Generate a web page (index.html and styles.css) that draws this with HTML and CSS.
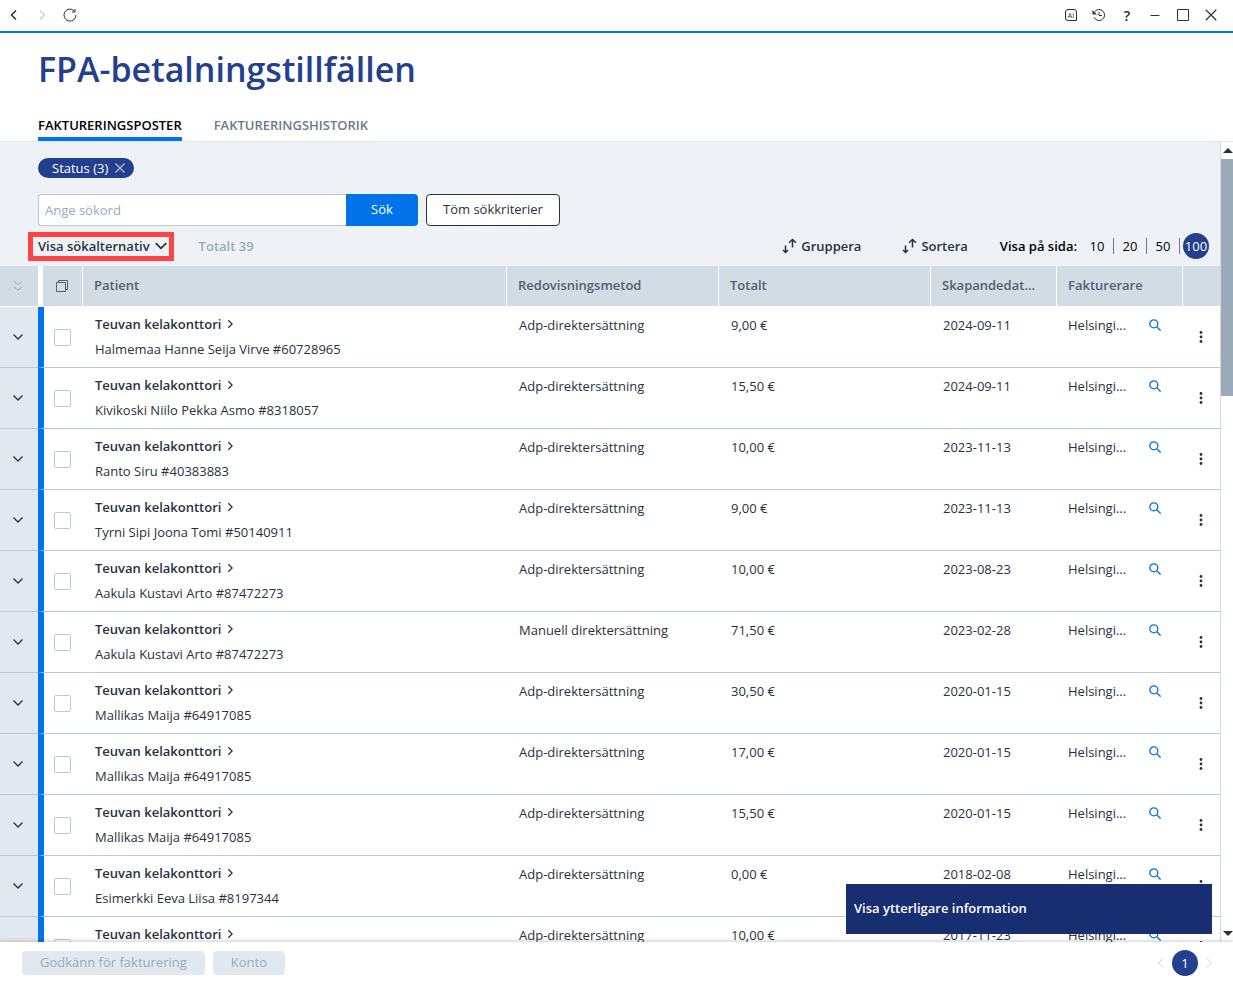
FILE: index.html
```html
<!DOCTYPE html>
<html lang="sv">
<head>
    <meta charset="UTF-8">
    <meta name="viewport" content="width=device-width, initial-scale=1.0">
    <title>FPA-betalningstillfällen</title>
    <link rel="stylesheet" href="styles.css">
</head>
<body>

    <svg class="symbols" aria-hidden="true">
        <symbol id="down" viewBox="0 0 12 12"><path d="M1.500 3.500 6 8l4.500-4.500"/></symbol>
        <symbol id="right" viewBox="0 0 12 12"><path d="M4 1.500 8.500 6 4 10.500"/></symbol>
        <symbol id="left" viewBox="0 0 12 12"><path d="M8 1.500 3.500 6 8 10.500"/></symbol>
        <symbol id="cross" viewBox="0 0 12 12"><path d="m1.500 1.500 9 9m0-9-9 9"/></symbol>
        <symbol id="search" viewBox="0 0 12 12"><circle cx="4.800" cy="4.800" r="4"/><path d="m7.800 7.800 3.800 3.800"/></symbol>
        <symbol id="dots" viewBox="0 0 4 12"><circle cx="2" cy="1.500" r="1.400"/><circle cx="2" cy="6" r="1.400"/><circle cx="2" cy="10.500" r="1.400"/></symbol>
        <symbol id="sort" viewBox="0 0 16 16"><path d="M4.500 7.500V14M2 12l2.500 2.500L7 12M11.500 9.500V2M8 4.800l3.500-3.300L15 4.800"/></symbol>
    </svg>

    <div class="window-bar">
        <div class="window-group">
            <button class="icon-button" aria-label="Tillbaka"><svg class="icon bold"><use href="#left"/></svg></button>
            <button class="icon-button faded" aria-label="Framåt"><svg class="icon bold"><use href="#right"/></svg></button>
            <button class="icon-button" aria-label="Uppdatera">
                <svg class="icon large" viewBox="0 0 14 14"><path d="M11.200 2.800A6 6 0 1 0 13 7"/><path d="M12 1v3H9"/></svg>
            </button>
        </div>
        <div class="window-group">
            <button class="icon-button" aria-label="AI">
                <svg class="icon" viewBox="0 0 12 12"><path d="M3 .5h6A2.500 2.500 0 0 1 11.500 3v8.500H3A2.500 2.500 0 0 1 .5 9V3A2.500 2.500 0 0 1 3 .5z"/><text class="ai" x="6" y="8.500" text-anchor="middle">AI</text></svg>
            </button>
            <button class="icon-button" aria-label="Historik">
                <svg class="icon large" viewBox="0 0 14 14"><path d="M2.500 4A5.500 5.500 0 1 1 2 9.200M7 4v3.500h3"/><path class="solid" d="M.5 2v4.500H5z"/></svg>
            </button>
            <button class="icon-button help" aria-label="Hjälp">?</button>
            <button class="icon-button" aria-label="Minimera"><svg class="icon" viewBox="0 0 12 12"><path d="M1.500 6.500h9"/></svg></button>
            <button class="icon-button" aria-label="Maximera"><svg class="icon" viewBox="0 0 12 12"><path d="M.5.5h11v11H.5z"/></svg></button>
            <button class="icon-button" aria-label="Stäng"><svg class="icon large"><use href="#cross"/></svg></button>
        </div>
    </div>

    <header class="page-header">
        <h1>FPA-betalningstillfällen</h1>
        <nav class="tabs">
            <a class="tab active" href="#poster">FAKTURERINGSPOSTER</a>
            <a class="tab" href="#historik">FAKTURERINGSHISTORIK</a>
        </nav>
    </header>

    <main class="main">
        <div class="content">
            <div class="filters">
                <button class="chip">Status (3) <svg class="icon"><use href="#cross"/></svg></button>
                <form class="search">
                    <input class="search-input" type="text" placeholder="Ange sökord" aria-label="Ange sökord">
                    <button class="search-button" type="button">Sök</button>
                    <button class="clear-button" type="reset">Töm sökkriterier</button>
                </form>
                <div class="options">
                    <button class="text-button toggle">Visa sökalternativ <svg class="icon large bold"><use href="#down"/></svg></button>
                    <span class="total">Totalt 39</span>
                    <button class="text-button group"><svg class="icon sort"><use href="#sort"/></svg>Gruppera</button>
                    <button class="text-button"><svg class="icon sort"><use href="#sort"/></svg>Sortera</button>
                    <div class="page-size">
                        <span class="page-size-label">Visa på sida:</span>
                        <button class="size">10</button>
                        <button class="size">20</button>
                        <button class="size">50</button>
                        <button class="round">100</button>
                    </div>
                </div>
            </div>

            <table class="table">
                <colgroup>
                    <col class="col-expand">
                    <col class="col-check">
                    <col>
                    <col class="col-wide">
                    <col class="col-wide">
                    <col class="col-narrow">
                    <col class="col-narrow">
                    <col class="col-menu">
                </colgroup>
                <thead>
                    <tr>
                        <th class="expand">
                            <button class="icon-button" aria-label="Visa alla"><svg class="icon" viewBox="0 0 12 12"><path d="m2 1.500 4 3 4-3M2 7l4 3 4-3"/></svg></button>
                        </th>
                        <th class="select">
                            <button class="icon-button" aria-label="Välj alla"><svg class="icon" viewBox="0 0 12 12"><path d="M.5 2.500h9v9h-9zM2.500 2.500v-2h9v9h-2"/></svg></button>
                        </th>
                        <th>Patient</th>
                        <th>Redovisningsmetod</th>
                        <th>Totalt</th>
                        <th>Skapandedat...</th>
                        <th>Fakturerare</th>
                        <th></th>
                    </tr>
                </thead>
                <tbody id="rows"></tbody>
            </table>
        </div>

        <div class="scrollbar" aria-hidden="true">
            <div class="arrow up"></div>
            <div class="track"><div class="thumb"></div></div>
            <div class="arrow"></div>
        </div>

        <button class="more-info">Visa ytterligare information</button>
    </main>

    <footer class="footer">
        <button class="action" disabled>Godkänn för fakturering</button>
        <button class="action" disabled>Konto</button>
        <div class="pager">
            <button class="icon-button faded" aria-label="Föregående"><svg class="icon"><use href="#left"/></svg></button>
            <button class="round">1</button>
            <button class="icon-button faded" aria-label="Nästa"><svg class="icon"><use href="#right"/></svg></button>
        </div>
    </footer>

    <script>
        const items = [
            ['Halmemaa Hanne Seija Virve #60728965', 'Adp-direktersättning', '9,00 €', '2024-09-11'],
            ['Kivikoski Niilo Pekka Asmo #8318057', 'Adp-direktersättning', '15,50 €', '2024-09-11'],
            ['Ranto Siru #40383883', 'Adp-direktersättning', '10,00 €', '2023-11-13'],
            ['Tyrni Sipi Joona Tomi #50140911', 'Adp-direktersättning', '9,00 €', '2023-11-13'],
            ['Aakula Kustavi Arto #87472273', 'Adp-direktersättning', '10,00 €', '2023-08-23'],
            ['Aakula Kustavi Arto #87472273', 'Manuell direktersättning', '71,50 €', '2023-02-28'],
            ['Mallikas Maija #64917085', 'Adp-direktersättning', '30,50 €', '2020-01-15'],
            ['Mallikas Maija #64917085', 'Adp-direktersättning', '17,00 €', '2020-01-15'],
            ['Mallikas Maija #64917085', 'Adp-direktersättning', '15,50 €', '2020-01-15'],
            ['Esimerkki Eeva Liisa #8197344', 'Adp-direktersättning', '0,00 €', '2018-02-08'],
            ['', 'Adp-direktersättning', '10,00 €', '2017-11-23']
        ];

        document.getElementById('rows').innerHTML = items.map(([patient, method, sum, date]) => `
            <tr>
                <td class="expand"><button class="icon-button" aria-label="Visa mer"><svg class="icon medium"><use href="#down"/></svg></button></td>
                <td class="select"><input class="checkbox" type="checkbox" aria-label="Välj ${patient}"></td>
                <td class="customer">
                    <a class="office" href="#kontor">Teuvan kelakonttori <svg class="icon small bold"><use href="#right"/></svg></a>
                    <div class="patient">${patient}</div>
                </td>
                <td>${method}</td>
                <td>${sum}</td>
                <td>${date}</td>
                <td class="biller-cell">
                    <div class="biller">
                        <span class="biller-name">Helsingi...</span>
                        <button class="icon-button lens" aria-label="Visa fakturerare"><svg class="icon medium"><use href="#search"/></svg></button>
                    </div>
                </td>
                <td class="menu"><button class="icon-button" aria-label="Meny"><svg class="icon dots"><use href="#dots"/></svg></button></td>
            </tr>`).join('');
    </script>

</body>
</html>
```
FILE: styles.css
```css
* {
    box-sizing: border-box;
}
body {
    display: flex;
    flex-direction: column;
    height: 100vh;
    margin: 0;
    overflow: hidden;
    background-color: #fff;
    color: #27323e;
    font-family: "Open Sans", "Noto Sans", sans-serif;
    font-size: 13px;
    line-height: 20px;
}
button,
input {
    font: inherit;
    color: inherit;
}
button {
    padding: 0;
    border: 0;
    background: none;
    cursor: pointer;
}
a {
    color: inherit;
    text-decoration: none;
}
.symbols {
    display: none;
}
.icon {
    flex: none;
    width: 12px;
    height: 12px;
    fill: none;
    stroke: currentColor;
    stroke-width: 1;
}
.icon.medium {
    stroke-width: 1.3;
}
.icon.bold {
    stroke-width: 1.5;
}
.icon.small {
    width: 10px;
    height: 10px;
}
.icon.large {
    width: 14px;
    height: 14px;
}
.icon.sort {
    width: 16px;
    height: 16px;
    stroke-width: 1.5;
}
.icon.dots {
    width: 4px;
    fill: currentColor;
    stroke: none;
}
.icon .solid {
    fill: currentColor;
    stroke: none;
}
.icon .ai {
    fill: currentColor;
    stroke: none;
    font-size: 7px;
}
.icon-button {
    display: inline-flex;
    align-items: center;
    justify-content: center;
    width: 28px;
    height: 28px;
}
.faded {
    color: #c5d3e0;
}
.help {
    font-size: 15px;
    font-weight: 600;
}

/* Window bar */
.window-bar {
    display: flex;
    justify-content: space-between;
    align-items: center;
    height: 33px;
    padding: 0 8px 2px 0;
    border-bottom: 2px solid #0073e9;
}
.window-group {
    display: flex;
}

/* Header */
.page-header {
    padding: 12px 38px 0;
    border-bottom: 1px solid #dfe6ed;
}
h1 {
    margin: 0;
    color: #233f8e;
    font-size: 34px;
    font-weight: 600;
    line-height: 48px;
}
.tabs {
    display: flex;
    gap: 32px;
    margin-top: 22px;
}
.tab {
    padding-bottom: 2px;
    border-bottom: 4px solid transparent;
    color: #6b7a8b;
    font-weight: 600;
}
.tab.active {
    border-color: #0073e9;
    color: #000;
}

/* Main */
.main {
    position: relative;
    display: flex;
    flex: 1;
    min-height: 0;
    overflow: hidden;
}
.content {
    flex: 1;
    min-width: 0;
    overflow: hidden;
}
.filters {
    padding: 16px 11px 0 38px;
    background-color: #eef2f7;
}
.chip {
    display: flex;
    align-items: center;
    gap: 6px;
    height: 20px;
    padding: 0 8px 0 14px;
    border-radius: 10px;
    background-color: #233f8e;
    color: #fff;
    line-height: 18px;
}
.chip .icon {
    color: #a7b3d2;
    stroke-width: 1.5;
}
.search {
    display: flex;
    margin-top: 16px;
}
.search-input {
    width: 308px;
    height: 32px;
    padding: 0 6px;
    border: 1px solid #b9c8d6;
    border-right: 0;
    border-radius: 3px 0 0 3px;
    background-color: #fff;
}
.search-input::placeholder {
    color: #9aaab9;
}
.search-button {
    width: 72px;
    padding-bottom: 2px;
    border-radius: 0 4px 4px 0;
    background-color: #0073e9;
    color: #fff;
}
.clear-button {
    margin-left: 8px;
    padding: 0 16px 2px;
    border: 1px solid #27323e;
    border-radius: 4px;
    background-color: #fff;
}
.options {
    display: flex;
    align-items: center;
    height: 40px;
    padding-bottom: 1px;
}
.text-button {
    display: flex;
    align-items: center;
    gap: 4px;
    font-weight: 600;
}
.toggle {
    position: relative;
}
.toggle::after {
    content: "";
    position: absolute;
    inset: -4px -6px -5px -10px;
    border: 5px solid #ff4343;
}
.total {
    margin-left: 31px;
    color: #9aaab9;
    font-weight: 600;
}
.group {
    margin-left: auto;
    margin-right: 40px;
}
.page-size {
    display: flex;
    align-items: center;
    margin-left: 32px;
    color: #000;
}
.page-size-label {
    margin-right: 4px;
    font-weight: 600;
}
.size {
    width: 33px;
    height: 16px;
    border-right: 1px solid #6b7a8b;
    line-height: 16px;
}
.round {
    width: 26px;
    height: 26px;
    border-radius: 50%;
    background-color: #233f8e;
    color: #fff;
}
.page-size .round {
    margin-left: 3px;
}

/* Table */
.table {
    width: 100%;
    table-layout: fixed;
    border-collapse: separate;
    border-spacing: 0;
}
.col-expand {
    width: 38px;
}
.col-check {
    width: 45px;
}
.col-wide {
    width: 212px;
}
.col-narrow {
    width: 126px;
}
.col-menu {
    width: 37px;
}
th {
    height: 41px;
    padding: 0 12px 2px 11px;
    border-right: 1px solid #fff;
    border-bottom: 1px solid #fff;
    background-color: #d1dce5;
    color: #52616f;
    font-weight: 600;
    text-align: left;
    white-space: nowrap;
}
th:last-child {
    border-right: 0;
}
td {
    height: 61px;
    padding: 8px 12px 7px;
    border-bottom: 1px solid #b9c8d6;
    vertical-align: top;
}
.expand,
.select,
.menu {
    padding: 0 2px 0 0;
    text-align: center;
    vertical-align: middle;
}
.expand .icon-button,
.select .icon-button,
.menu .icon-button {
    vertical-align: middle;
}
th.expand {
    border-right: 0;
    color: #9aaab9;
}
td.expand {
    background-color: #e1e8ef;
}
th.select {
    border-left: 5px solid #fff;
}
td.select {
    border-left: 6px solid #0073e9;
}
.checkbox {
    appearance: none;
    display: block;
    width: 17px;
    height: 17px;
    margin: 0 10px;
    border: 1px solid #b9c8d6;
    border-radius: 2px;
    background-color: #fff;
}
.customer {
    padding-top: 7px;
}
.office {
    font-weight: 600;
}
.patient {
    margin-top: 5px;
}
.biller-cell {
    padding-left: 11px;
}
.biller {
    display: flex;
    align-items: center;
    height: 20px;
}
.biller-name {
    width: 62px;
}
.lens {
    margin-left: 11px;
    color: #0073e9;
}

/* Scrollbar */
.scrollbar {
    display: flex;
    flex-direction: column;
    width: 13px;
    border-left: 1px solid #d1dce5;
}
.arrow {
    height: 17px;
    padding: 6px 1px 6px 2px;
}
.arrow::before {
    content: "";
    display: block;
    width: 0;
    border: 5px solid transparent;
    border-top-color: #27323e;
    border-bottom: 0;
}
.arrow.up::before {
    border-top: 0;
    border-bottom: 5px solid #27323e;
}
.track {
    flex: 1;
}
.thumb {
    height: 31%;
    background-color: #9aaab9;
}

.more-info {
    position: absolute;
    right: 21px;
    bottom: 8px;
    width: 366px;
    height: 50px;
    padding: 0 8px 2px;
    background-color: #172e70;
    color: #fff;
    font-weight: 600;
    text-align: left;
}

/* Footer */
.footer {
    position: relative;
    display: flex;
    align-items: center;
    gap: 8px;
    height: 40px;
    padding: 2px 13px 0 22px;
    background-color: #fff;
    box-shadow: 0 -1px 4px rgba(0, 0, 0, 0.2);
}
.action {
    height: 24px;
    padding: 0 18px 2px;
    border-radius: 4px;
    background-color: #e1e8ef;
    color: #9aaab9;
}
.pager {
    display: flex;
    align-items: center;
    margin-left: auto;
}
.pager .icon-button {
    width: 22px;
}
```
